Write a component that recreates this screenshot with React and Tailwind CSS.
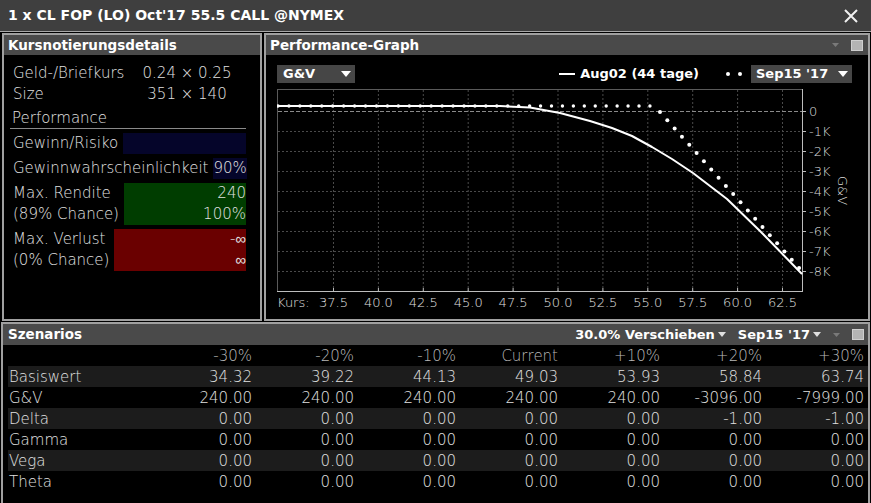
import React from 'react'

const ticks = ['37.5', '40.0', '42.5', '45.0', '47.5', '50.0', '52.5', '55.0', '57.5', '60.0', '62.5']
const tx = (i) => 333 + i * 44.9
const yLabels = ['0', '-1K', '-2K', '-3K', '-4K', '-5K', '-6K', '-7K', '-8K']
const thin = 'DejaVu Sans ExtraLight, DejaVu Sans, sans-serif'

const solid = [
  [277, 105], [500, 105], [530, 106.5], [560, 112], [590, 120], [612, 127], [632, 135],
  [652, 146], [672, 158], [693, 172], [727, 198], [760, 230], [802, 273],
]

function Graph() {
  const flat = []
  for (let k = 0; k < 35; k++) flat.push([278 + k * 10.94, 105])
  const diag = []
  for (let i = 0; i < 20; i++) diag.push([660 + i * 7.32, 111 + i * 8.21])
  return (
    <svg width="590" height="226" className="block">
      <g transform="translate(-277,-88)">
        <line x1="277.5" y1="88" x2="277.5" y2="290" stroke="#5a5a5a" />
        <line x1="277" y1="88.5" x2="802" y2="88.5" stroke="#5a5a5a" />
        {ticks.map((t, i) => (
          <line key={t} x1={tx(i) + 0.5} y1="89" x2={tx(i) + 0.5} y2="290" stroke="#4a4a4a" strokeDasharray="2 2" />
        ))}
        {yLabels.slice(1).map((l, i) => (
          <line key={l} x1="278" y1={130.5 + i * 20} x2="802" y2={130.5 + i * 20} stroke="#4a4a4a" strokeDasharray="2 2" />
        ))}
        <line x1="278" y1="110.5" x2="802" y2="110.5" stroke="#8a8a8a" strokeDasharray="4 2" />
        <line x1="802.5" y1="88" x2="802.5" y2="291" stroke="#bdbdbd" />
        <line x1="277" y1="290.5" x2="803" y2="290.5" stroke="#bdbdbd" />
        {ticks.map((t, i) => (
          <line key={'k' + t} x1={tx(i) + 0.5} y1="287" x2={tx(i) + 0.5} y2="291" stroke="#bdbdbd" />
        ))}
        {yLabels.map((l, i) => (
          <g key={'y' + l}>
            <line x1="802" y1={110.5 + i * 20} x2="806" y2={110.5 + i * 20} stroke="#bdbdbd" />
            <text x="809" y={115 + i * 20} fill="#dcdcdc" fontSize="13" fontFamily={thin} fontWeight="200">{l}</text>
          </g>
        ))}
        <text x="0" y="0" transform="translate(838,175) rotate(90)" fill="#dcdcdc" fontSize="13" fontFamily={thin} fontWeight="200">G&amp;V</text>
        <polyline points={solid.map((p) => p.join(',')).join(' ')} fill="none" stroke="#ffffff" strokeWidth="2" strokeLinejoin="round" />
        {flat.map(([x, y], i) => <circle key={'f' + i} cx={x} cy={y} r="1.7" fill="#ffffff" />)}
        {diag.map(([x, y], i) => <circle key={'d' + i} cx={x} cy={y} r="2" fill="#ffffff" />)}
        <text x="277" y="306" fill="#e0e0e0" fontSize="13" fontFamily={thin} fontWeight="200">Kurs:</text>
        {ticks.map((t, i) => (
          <text key={'l' + t} x={tx(i) + 0.5} y="306" textAnchor="middle" fill="#e0e0e0" fontSize="13" fontFamily={thin} fontWeight="200">{t}</text>
        ))}
      </g>
    </svg>
  )
}

function Caret({ className = '' }) {
  return (
    <svg width="10" height="6" viewBox="0 0 10 6" className={className}>
      <path d="M0 0 L10 0 L5 6 Z" fill="currentColor" />
    </svg>
  )
}

function HeaderIcons() {
  return (
    <div className="flex items-center gap-[12px]">
      <svg width="7" height="4" viewBox="0 0 7 4"><path d="M0 0 L7 0 L3.5 4 Z" fill="#7a7a7a" /></svg>
      <div className="w-[12px] h-[11px] bg-[#b4b4b4] border border-[#cfcfcf]" />
    </div>
  )
}

const rows = [
  ['Basiswert', '34.32', '39.22', '44.13', '49.03', '53.93', '58.84', '63.74'],
  ['G&V', '240.00', '240.00', '240.00', '240.00', '240.00', '-3096.00', '-7999.00'],
  ['Delta', '0.00', '0.00', '0.00', '0.00', '0.00', '-1.00', '-1.00'],
  ['Gamma', '0.00', '0.00', '0.00', '0.00', '0.00', '0.00', '0.00'],
  ['Vega', '0.00', '0.00', '0.00', '0.00', '0.00', '0.00', '0.00'],
  ['Theta', '0.00', '0.00', '0.00', '0.00', '0.00', '0.00', '0.00'],
]
const cols = ['-30%', '-20%', '-10%', 'Current', '+10%', '+20%', '+30%']

export default function App() {
  return (
    <div className="w-[871px] h-[503px] overflow-hidden bg-black font-['DejaVu_Sans',sans-serif] text-[#e2e2e2]">
      <div className="h-[31px] bg-[#3f3f3f] flex items-center justify-between pl-[8px] pr-[13px]">
        <span className="font-bold text-[14px] text-white">1 x CL FOP (LO) Oct'17 55.5 CALL @NYMEX</span>
        <svg width="14" height="14" viewBox="0 0 14 14">
          <path d="M1 1 L13 13 M13 1 L1 13" stroke="#f0f0f0" strokeWidth="2" />
        </svg>
      </div>
      <div className="h-[1px] bg-[#a8a8a8]" />
      <div className="flex gap-[2px] pl-[2px] pr-[1px] pt-[1px] h-[289px]">
        <div className="w-[260px] border-2 border-[#a0a0a0] flex flex-col">
          <div className="h-[20px] bg-[#4a4a4a] flex items-center pl-[4px] font-bold text-[13.5px] text-white">Kursnotierungsdetails</div>
          <div className="pl-[9px] pr-[14px] pt-[8px] font-extralight text-[15px] font-['DejaVu_Sans_ExtraLight','DejaVu_Sans',sans-serif]">
            <div className="h-[21px] flex items-center">
              <span className="w-[115px]">Geld-/Briefkurs</span>
              <span className="flex-1 text-center">0.24 × 0.25</span>
            </div>
            <div className="h-[21px] flex items-center">
              <span className="w-[115px]">Size</span>
              <span className="flex-1 text-center">351 × 140</span>
            </div>
            <div className="mt-[4px] h-[20px] flex items-center -ml-[3px] pl-[2px] border-b border-[#8a8a8a]">Performance</div>
            <div className="mt-[4px] flex gap-[5px] h-[21px] items-center">
              <span>Gewinn/Risiko</span>
              <div className="flex-1 h-full bg-[#05052a]" />
            </div>
            <div className="mt-[4px] flex gap-[5px] h-[21px] items-center">
              <span>Gewinnwahrscheinlichkeit</span>
              <div className="flex-1 h-full bg-[#05052a] text-right leading-[21px]">90%</div>
            </div>
            <div className="mt-[4px] flex gap-[5px] h-[42px]">
              <div className="flex flex-col leading-[21px]"><span>Max. Rendite</span><span>(89% Chance)</span></div>
              <div className="flex-1 bg-[#003d00] text-right leading-[21px] flex flex-col"><span>240</span><span>100%</span></div>
            </div>
            <div className="mt-[4px] flex gap-[5px] h-[42px]">
              <div className="flex flex-col leading-[21px]"><span>Max. Verlust</span><span>(0% Chance)</span></div>
              <div className="flex-1 bg-[#6a0000] text-right leading-[21px] flex flex-col"><span>-∞</span><span>∞</span></div>
            </div>
          </div>
        </div>
        <div className="flex-1 border-2 border-[#a0a0a0] flex flex-col">
          <div className="h-[20px] bg-[#4a4a4a] flex items-center justify-between pl-[4px] pr-[5px]">
            <span className="font-bold text-[13.5px] text-white">Performance-Graph</span>
            <HeaderIcons />
          </div>
          <div className="pl-[11px] pt-[10px]">
            <div className="flex items-center h-[18px] pr-[16px]">
              <div className="w-[78px] h-[18px] bg-[#464646] flex items-center justify-between pl-[6px] pr-[4px] font-bold text-[13px] text-white">
                <span>G&amp;V</span><Caret className="text-white" />
              </div>
              <div className="flex-1" />
              <div className="w-[16px] h-[2px] bg-white mr-[5px]" />
              <span className="font-bold text-[13px] text-white">Aug02 (44 tage)</span>
              <div className="ml-[27px] flex gap-[8px]">
                <div className="w-[4px] h-[4px] rounded-full bg-white" />
                <div className="w-[4px] h-[4px] rounded-full bg-white" />
              </div>
              <div className="ml-[9px] w-[101px] h-[18px] bg-[#464646] flex items-center justify-between pl-[5px] pr-[4px] font-bold text-[13px] text-white">
                <span>Sep15 '17</span><Caret className="text-white" />
              </div>
            </div>
            <div className="mt-[6px]">
              <Graph />
            </div>
          </div>
        </div>
      </div>
      <div className="mt-[1px] ml-[1px] mr-[1px] h-[181px] border-2 border-b-0 border-[#a0a0a0] flex flex-col">
        <div className="h-[21px] shrink-0 bg-[#4a4a4a] flex items-center justify-between pl-[5px] pr-[4px]">
          <span className="font-bold text-[13.5px] text-white">Szenarios</span>
          <div className="flex items-center font-bold text-[13px] text-white">
            <span>30.0% Verschieben</span>
            <svg width="8" height="5" viewBox="0 0 8 5" className="ml-[3px]"><path d="M0 0 L8 0 L4 5 Z" fill="#e0e0e0" /></svg>
            <span className="ml-[12px]">Sep15 '17</span>
            <svg width="8" height="5" viewBox="0 0 8 5" className="ml-[3px] mr-[12px]"><path d="M0 0 L8 0 L4 5 Z" fill="#e0e0e0" /></svg>
            <HeaderIcons />
          </div>
        </div>
        <div className="pl-[5px] font-extralight text-[15px] font-['DejaVu_Sans_ExtraLight','DejaVu_Sans',sans-serif]">
          <div className="grid grid-cols-[142px_repeat(7,102px)] h-[21px] items-center text-[#b8b8b8]">
            <span />
            {cols.map((c) => <span key={c} className="text-right">{c}</span>)}
          </div>
          {rows.map((r, i) => (
            <div key={r[0]} className={`grid grid-cols-[142px_repeat(7,102px)] h-[21px] items-center ${i % 2 === 0 ? 'bg-[#1c1c1c]' : 'bg-black'}`}>
              {r.map((c, j) => <span key={j} className={j === 0 ? 'pl-[1px]' : 'text-right'}>{c}</span>)}
            </div>
          ))}
        </div>
      </div>
    </div>
  )
}
